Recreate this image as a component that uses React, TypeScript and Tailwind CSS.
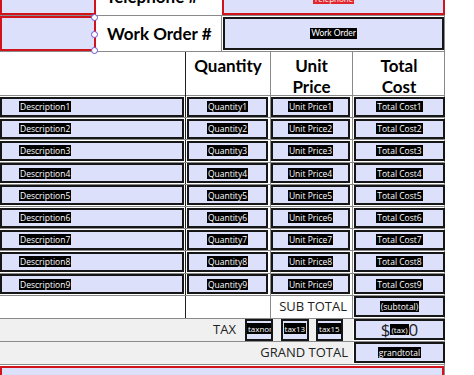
import React from "react";

const rows = [1, 2, 3, 4, 5, 6, 7, 8, 9];

function Hl({ children, className = "" }: { children: React.ReactNode; className?: string }) {
  return <span className={"bg-black text-white leading-[11px] px-px " + className}>{children}</span>;
}

function Box({ children, className = "" }: { children?: React.ReactNode; className?: string }) {
  return (
    <div className={"flex items-center border-2 border-[#161616] bg-[#dde0fb] " + className}>
      {children}
    </div>
  );
}

function Handle({ top }: { top: string }) {
  return (
    <span
      className={"absolute -right-[4px] h-[7px] w-[7px] rounded-full border border-[#6b4fd0] bg-white " + top}
    />
  );
}

export default function App() {
  return (
    <div className="h-[375px] w-[474px] overflow-hidden bg-white text-black" style={{ fontFamily: "Lato, 'Open Sans', sans-serif" }}>
      <div className="-mt-[21px] w-[445px] border-r border-[#8a8a8a]">
        {/* Telephone row */}
        <div className="grid h-[37px] grid-cols-[96px_126px_223px] border-b border-[#8a8a8a]">
          <div className="border-2 border-[#d1141c] bg-[#dde0fb]" />
          <div className="flex items-center pl-[10px] text-[17px] font-bold">Telephone #</div>
          <div className="flex items-center justify-center border-2 border-[#d1141c] bg-[#dde0fb] pt-[4px]">
            <span className="bg-[#e3262e] px-px text-[8px] leading-[10px] text-white" style={{ fontFamily: "'Open Sans', sans-serif" }}>
              Telephone
            </span>
          </div>
        </div>
        {/* Work order row */}
        <div className="grid h-[36px] grid-cols-[96px_126px_223px] border-b border-[#8a8a8a]">
          <div className="relative border-2 border-[#d1141c] bg-[#dde0fb]">
            <Handle top="-top-[4px]" />
            <Handle top="top-[13px]" />
            <Handle top="top-[29px]" />
          </div>
          <div className="flex items-center border-r border-[#8a8a8a] pl-[11px] text-[17px] font-bold">Work Order #</div>
          <div className="p-[1px]">
            <Box className="h-full justify-center">
              <Hl className="text-[8.5px]">Work Order</Hl>
            </Box>
          </div>
        </div>
      </div>

      <div className="w-[445px] border-r border-[#8a8a8a]" style={{ fontFamily: "'Open Sans', sans-serif" }}>
        {/* header */}
        <div className="grid h-[44px] grid-cols-[186px_85px_82px_92px] border-b border-[#8a8a8a] text-[17px] font-bold leading-[21px]" style={{ fontFamily: "Lato, sans-serif" }}>
          <div className="border-r border-[#222]" />
          <div className="border-r border-[#8a8a8a] pt-[3px] text-center">Quantity</div>
          <div className="border-r border-[#8a8a8a] pt-[3px] text-center">
            Unit
            <br />
            Price
          </div>
          <div className="pt-[3px] text-center">
            Total
            <br />
            Cost
          </div>
        </div>

        {/* rows */}
        {rows.map((n) => (
          <div key={n} className="grid h-[22.2px] grid-cols-[186px_85px_82px_92px] border-b border-[#8a8a8a] text-[8.5px]">
            <div className="flex items-center border-r border-[#222] pr-[1px]">
              <Box className="h-[20px] w-full pl-[17px]">
                <Hl>Description{n}</Hl>
              </Box>
            </div>
            <div className="flex items-center border-r border-[#8a8a8a] pl-[1px] pr-[2px]">
              <Box className="h-[20px] w-full justify-center">
                <Hl>Quantity{n}</Hl>
              </Box>
            </div>
            <div className="flex items-center border-r border-[#8a8a8a] pr-[2px]">
              <Box className="h-[20px] w-full justify-center">
                <Hl>Unit Price{n}</Hl>
              </Box>
            </div>
            <div className="flex items-center pl-[1px]">
              <Box className="h-[20px] w-full justify-center">
                <Hl>Total Cost{n}</Hl>
              </Box>
            </div>
          </div>
        ))}

        {/* sub total */}
        <div className="grid h-[23px] grid-cols-[186px_85px_82px_92px] border-b border-[#8a8a8a]">
          <div className="border-r border-[#222]" />
          <div className="border-r border-[#8a8a8a]" />
          <div className="flex items-center justify-end border-r border-[#8a8a8a] pr-[5px] text-[13px] text-[#222]">SUB TOTAL</div>
          <div className="flex items-center pl-[1px]">
            <Box className="h-[21px] w-full justify-center text-[8.5px]">
              <Hl>(subtotal)</Hl>
            </Box>
          </div>
        </div>

        {/* tax */}
        <div className="grid h-[23px] grid-cols-[353px_92px] border-b border-[#8a8a8a]">
          <div className="flex items-center bg-[#f0f0f0] pl-[213px] text-[13px] text-[#222]">
            <span className="mr-[9px]">TAX</span>
            <Box className="mr-[8px] h-[22px] w-[28px] items-start overflow-hidden pt-[2px] text-[8px]">
              <Hl>taxnor</Hl>
            </Box>
            <Box className="mr-[7px] h-[22px] w-[28px] items-start justify-center pt-[2px] text-[8px]">
              <Hl>tax13</Hl>
            </Box>
            <Box className="h-[22px] w-[27px] items-start justify-center pt-[2px] text-[8px]">
              <Hl>tax15</Hl>
            </Box>
          </div>
          <div className="flex items-center pl-[1px]">
            <Box className="h-[21px] w-full justify-center text-[17px] leading-none text-[#222]">
              $<Hl className="text-[8px]">(tax)</Hl>0
            </Box>
          </div>
        </div>

        {/* grand total */}
        <div className="grid h-[23px] grid-cols-[353px_92px] border-b border-[#8a8a8a]">
          <div className="flex items-center justify-end bg-[#f0f0f0] pr-[5px] text-[13px] text-[#222]">GRAND TOTAL</div>
          <div className="flex items-center pl-[1px]">
            <Box className="h-[21px] w-full justify-center text-[8.5px]">
              <Hl>grandtotal</Hl>
            </Box>
          </div>
        </div>

        {/* next field */}
        <div className="mt-[1px] h-[30px] border-2 border-[#d1141c] bg-[#dde0fb]" />
      </div>
    </div>
  );
}
